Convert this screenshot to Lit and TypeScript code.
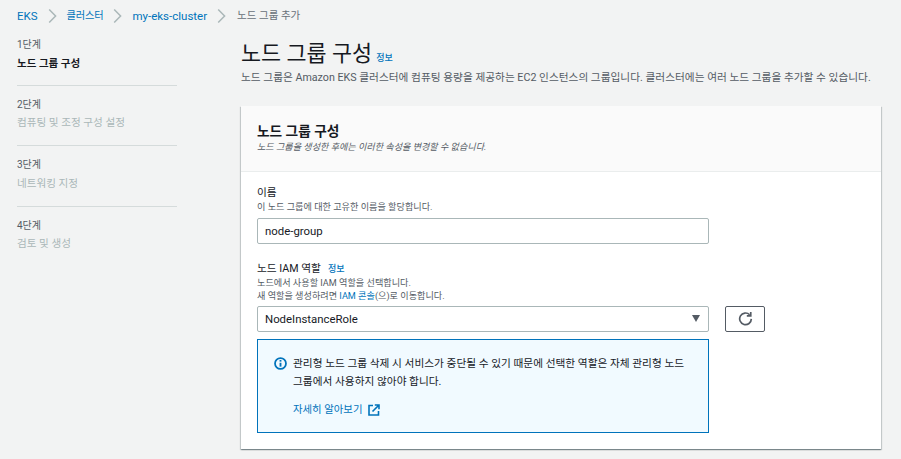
import { LitElement, html, css } from "lit";
import { customElement } from "lit/decorators.js";

const chevron = html`<svg class="chev" width="9" height="16" viewBox="0 0 9 16"><path d="M1.2 1.5 L7.6 8 L1.2 14.5" fill="none" stroke="#aab7b8" stroke-width="1.5"/></svg>`;

@customElement("app-root")
export class AppRoot extends LitElement {
  static styles = css`
    :host {
      display: block;
      width: 901px;
      height: 459px;
      overflow: hidden;
      background: #f2f3f3;
      color: #16191f;
      font-family: "Roboto", "Noto Sans CJK KR", sans-serif;
      font-size: 12px;
    }
    a { color: #0073bb; text-decoration: none; }
    .crumbs {
      display: flex;
      align-items: center;
      height: 16px;
      padding: 8px 0 0 17px;
      font-size: 11.5px;
      line-height: 16px;
    }
    .crumbs .chev { margin: 0 10px 0 10px; }
    .crumbs .ko { font-size: 10.2px; letter-spacing: -0.15px; }
    .crumbs .cur { color: #687078; font-size: 10.5px; margin-left: 1px; }
    .layout {
      display: grid;
      grid-template-columns: 160px 640px;
      column-gap: 64px;
      padding: 0 0 0 17px;
    }
    .side { padding-top: 13px; }
    .step { height: 48.5px; box-sizing: border-box; border-bottom: 1px solid #d5dbdb; padding-top: 1px; }
    .step + .step { height: 60.5px; padding-top: 12px; }
    .step:last-child { border-bottom: 0; }
    .step-n { font-size: 10px; line-height: 14px; color: #545b64; margin-bottom: 3.5px; }
    .step-t { font-size: 10.6px; line-height: 16px; color: #aab7b8; }
    .step-t.on { color: #16191f; font-weight: 700; font-size: 10.5px; }
    .main { padding-top: 15px; }
    h1 {
      margin: 0;
      height: 30px;
      font-size: 21.8px;
      font-weight: 400;
      line-height: 30px;
      display: flex;
      align-items: baseline;
      gap: 4px;
    }
    .info { font-size: 9px; font-weight: 500; }
    .desc { margin-top: 1px; height: 16px; font-size: 10.7px; line-height: 16px; color: #545b64; white-space: nowrap; }
    .card {
      margin-top: 20px;
      background: #fff;
      box-shadow: 0 1px 1px 0 rgba(0,28,36,.3), 1px 1px 1px 0 rgba(0,28,36,.15), -1px 1px 1px 0 rgba(0,28,36,.15);
      height: 343px;
    }
    .card-h {
      background: #fafafa;
      border-bottom: 1px solid #eaeded;
      height: 66px;
      box-sizing: border-box;
      padding: 15px 16px 0;
    }
    .card-h h2 { margin: 0; font-size: 13.7px; line-height: 20px; font-weight: 700; }
    .card-h p { margin: 0; font-size: 9.1px; line-height: 13px; font-style: italic; color: #545b64; }
    .card-b { padding: 14px 16px 0; }
    .label { height: 14px; font-size: 10.7px; line-height: 14px; color: #16191f; display: flex; gap: 7px; align-items: baseline; margin-bottom: 0.5px; }
    .hint { font-size: 9.15px; line-height: 13px; color: #545b64; }
    .input {
      box-sizing: border-box;
      width: 452px;
      height: 26px;
      margin-top: 4.5px;
      border: 1px solid #aab7b8;
      border-radius: 2px;
      background: #fff;
      display: flex;
      align-items: center;
      justify-content: space-between;
      padding: 0 8px 0 7px;
      font-size: 11.4px;
    }
    .f2 { margin-top: 18px; }
    .sel-row { display: flex; align-items: center; gap: 16px; margin-top: 3px; }
    .sel-row .input { margin-top: 0; }
    .refresh {
      box-sizing: border-box;
      width: 40px;
      height: 26px;
      border: 1px solid #545b64;
      border-radius: 2px;
      display: flex;
      align-items: center;
      justify-content: center;
    }
    .arrow { width: 0; height: 0; border-left: 4px solid transparent; border-right: 4px solid transparent; border-top: 7px solid #545b64; }
    .alert {
      box-sizing: border-box;
      width: 452px;
      height: 94px;
      margin-top: 7px;
      border: 1px solid #0073bb;
      background: #f1faff;
      padding: 15px 16px 0;
      display: flex;
      gap: 6px;
    }
    .alert svg.i { flex: none; margin-top: 2px; }
    .alert p { margin: 0; font-size: 10.7px; line-height: 18px; color: #16191f; white-space: nowrap; }
    .alert .more { display: flex; align-items: center; gap: 5px; margin-top: 11px; font-size: 10.4px; line-height: 16px; }
  `;

  render() {
    return html`
      <nav class="crumbs">
        <a href="#">EKS</a>${chevron}<a class="ko" href="#">클러스터</a>${chevron}<a href="#">my-eks-cluster</a>${chevron}<span class="cur">노드 그룹 추가</span>
      </nav>
      <div class="layout">
        <aside class="side">
          <div class="step"><div class="step-n">1단계</div><div class="step-t on">노드 그룹 구성</div></div>
          <div class="step"><div class="step-n">2단계</div><div class="step-t">컴퓨팅 및 조정 구성 설정</div></div>
          <div class="step"><div class="step-n">3단계</div><div class="step-t">네트워킹 지정</div></div>
          <div class="step"><div class="step-n">4단계</div><div class="step-t">검토 및 생성</div></div>
        </aside>
        <main class="main">
          <h1>노드 그룹 구성<a class="info" href="#">정보</a></h1>
          <div class="desc">노드 그룹은 Amazon EKS 클러스터에 컴퓨팅 용량을 제공하는 EC2 인스턴스의 그룹입니다. 클러스터에는 여러 노드 그룹을 추가할 수 있습니다.</div>
          <section class="card">
            <header class="card-h">
              <h2>노드 그룹 구성</h2>
              <p>노드 그룹을 생성한 후에는 이러한 속성을 변경할 수 없습니다.</p>
            </header>
            <div class="card-b">
              <div class="label">이름</div>
              <div class="hint">이 노드 그룹에 대한 고유한 이름을 할당합니다.</div>
              <div class="input">node-group</div>
              <div class="f2">
                <div class="label">노드 IAM 역할<a class="info" href="#">정보</a></div>
                <div class="hint">노드에서 사용할 IAM 역할을 선택합니다.</div>
                <div class="hint">새 역할을 생성하려면 <a href="#">IAM 콘솔</a>(으)로 이동합니다.</div>
              </div>
              <div class="sel-row">
                <div class="input">NodeInstanceRole<span class="arrow"></span></div>
                <div class="refresh">
                  <svg width="15" height="15" viewBox="0 0 16 16" fill="none"><path d="M12.4 4A6.2 6.2 0 1 0 14.2 8.4" stroke="#545b64" stroke-width="1.8"/><path d="M13.6 1v4.2H9.4" stroke="#545b64" stroke-width="1.8"/></svg>
                </div>
              </div>
              <div class="alert">
                <svg class="i" width="13" height="13" viewBox="0 0 14 14" fill="none"><circle cx="7" cy="7" r="5.9" stroke="#0073bb" stroke-width="1.9"/><path d="M7 6.2V10.4" stroke="#0073bb" stroke-width="2"/><path d="M7 3.2V5" stroke="#0073bb" stroke-width="2"/></svg>
                <div>
                  <p>관리형 노드 그룹 삭제 시 서비스가 중단될 수 있기 때문에 선택한 역할은 자체 관리형 노드<br/>그룹에서 사용하지 않아야 합니다.</p>
                  <a class="more" href="#">자세히 알아보기<svg width="12" height="12" viewBox="0 0 12 12" fill="none"><path d="M5 1.5H1V11H10.5V7" stroke="#0073bb" stroke-width="1.6"/><path d="M4.5 7.5 10.5 1.5M6.8 1H11V5.2" stroke="#0073bb" stroke-width="1.6"/></svg></a>
                </div>
              </div>
            </div>
          </section>
        </main>
      </div>
    `;
  }
}
